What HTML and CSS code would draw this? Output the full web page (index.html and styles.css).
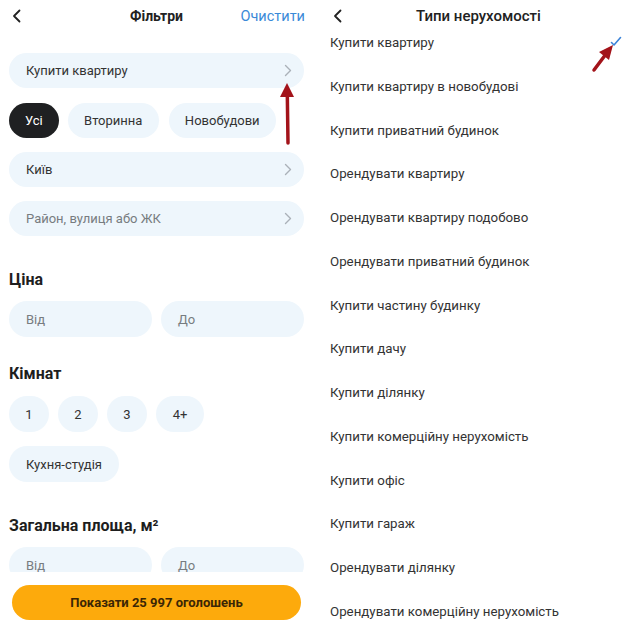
FILE: index.html
```html
<!DOCTYPE html>
<html lang="uk">
<head>
  <meta charset="UTF-8">
  <meta name="viewport" content="width=device-width, initial-scale=1.0">
  <title>Фільтри</title>
  <link rel="stylesheet" href="styles.css">
</head>
<body>

  <div class="screens">

    <!-- left: filters -->
    <section class="screen filters">
      <header class="topbar">
        <svg class="back" width="9" height="14" viewBox="0 0 9 14"><path d="M7.5 1.5 2 7l5.5 5.5" fill="none" stroke="#222" stroke-width="1.8" stroke-linecap="round" stroke-linejoin="round"/></svg>
        <h1>Фільтри</h1>
        <a class="clear">Очистити</a>
      </header>

      <div class="scroll">
        <div class="field select">
          <span>Купити квартиру</span>
          <svg class="chev" width="8" height="13" viewBox="0 0 8 13"><path d="M1.5 1.5 6.5 6.5l-5 5" fill="none" stroke="#aab1b8" stroke-width="1.4" stroke-linecap="round" stroke-linejoin="round"/></svg>
        </div>

        <div class="chips deal">
          <span class="chip active">Усі</span>
          <span class="chip">Вторинна</span>
          <span class="chip">Новобудови</span>
        </div>

        <div class="field select city">
          <span>Київ</span>
          <svg class="chev" width="8" height="13" viewBox="0 0 8 13"><path d="M1.5 1.5 6.5 6.5l-5 5" fill="none" stroke="#aab1b8" stroke-width="1.4" stroke-linecap="round" stroke-linejoin="round"/></svg>
        </div>

        <div class="field select street">
          <span class="placeholder">Район, вулиця або ЖК</span>
          <svg class="chev" width="8" height="13" viewBox="0 0 8 13"><path d="M1.5 1.5 6.5 6.5l-5 5" fill="none" stroke="#aab1b8" stroke-width="1.4" stroke-linecap="round" stroke-linejoin="round"/></svg>
        </div>

        <h2 class="price-title">Ціна</h2>
        <div class="range">
          <div class="field"><span class="placeholder">Від</span></div>
          <div class="field"><span class="placeholder">До</span></div>
        </div>

        <h2 class="rooms-title">Кімнат</h2>
        <div class="chips rooms">
          <span class="chip num">1</span>
          <span class="chip num">2</span>
          <span class="chip num">3</span>
          <span class="chip num wide">4+</span>
        </div>
        <div class="chips kitchen">
          <span class="chip">Кухня-студія</span>
        </div>

        <h2 class="area-title">Загальна площа, м²</h2>
        <div class="range area">
          <div class="field"><span class="placeholder">Від</span></div>
          <div class="field"><span class="placeholder">До</span></div>
        </div>
      </div>

      <div class="footer">
        <button class="show-btn">Показати 25 997 оголошень</button>
      </div>
    </section>

    <!-- right: property types -->
    <section class="screen types">
      <header class="topbar">
        <svg class="back" width="9" height="14" viewBox="0 0 9 14"><path d="M7.5 1.5 2 7l5.5 5.5" fill="none" stroke="#222" stroke-width="1.8" stroke-linecap="round" stroke-linejoin="round"/></svg>
        <h1>Типи нерухомості</h1>
      </header>

      <ul class="type-list">
        <li class="selected">
          <span>Купити квартиру</span>
          <svg class="check" width="12" height="11" viewBox="0 0 12 11"><path d="M1.5 6.5 4 9l6.5-7.5" fill="none" stroke="#3b83d8" stroke-width="1.6" stroke-linecap="round" stroke-linejoin="round"/></svg>
        </li>
        <li>Купити квартиру в новобудові</li>
        <li>Купити приватний будинок</li>
        <li>Орендувати квартиру</li>
        <li>Орендувати квартиру подобово</li>
        <li>Орендувати приватний будинок</li>
        <li>Купити частину будинку</li>
        <li>Купити дачу</li>
        <li>Купити ділянку</li>
        <li>Купити комерційну нерухомість</li>
        <li>Купити офіс</li>
        <li>Купити гараж</li>
        <li>Орендувати ділянку</li>
        <li>Орендувати комерційну нерухомість</li>
      </ul>
    </section>

    <!-- red annotation arrows drawn over the screenshots -->
    <svg class="marks" width="625" height="624" viewBox="0 0 625 624">
      <path d="M288 143 L287.3 94" stroke="#a3131a" stroke-width="3.5" stroke-linecap="round"/>
      <path d="M287 83 L280 97 L294 97 Z" fill="#a3131a"/>
      <path d="M594 70 L606 54" stroke="#a3131a" stroke-width="3.5" stroke-linecap="round"/>
      <path d="M613 45 L599 52 L609 60 Z" fill="#a3131a"/>
    </svg>

  </div>

</body>
</html>
```

FILE: styles.css
```css
*{
margin: 0;
padding: 0;
box-sizing: border-box;
font-family: Roboto, 'Noto Sans', sans-serif;
}

html, body{
height: 100%;
overflow: hidden;
background: #fff;
color: #2b2b2b;
}

.screens{
position: relative;
display: flex;
width: 625px;
height: 624px;
}

.screen{
height: 624px;
}

/* ---------- filters ---------- */

.filters{
width: 315px;
padding: 0 11px 0 9px;
display: flex;
flex-direction: column;
}

.topbar{
height: 32px;
display: flex;
align-items: center;
position: relative;
}

.topbar h1{
font-size: 14px;
font-weight: 700;
color: #222;
}

.filters .topbar .back{
margin-left: 3px;
}

.filters .topbar h1{
position: absolute;
left: 0;
right: 0;
text-align: center;
pointer-events: none;
}

.clear{
margin-left: auto;
margin-right: -1px;
font-size: 14.5px;
color: #3a8ad8;
}

.scroll{
height: 540px;
overflow: hidden;
}

.field{
height: 35px;
border-radius: 18px;
background: #eef6fc;
display: flex;
align-items: center;
padding: 0 12px 0 17px;
font-size: 13px;
color: #333;
}

.field.select{
justify-content: space-between;
}

.field.select:first-child{
margin-top: 21px;
}

.placeholder{
color: #777c80;
}

.city{
margin-top: 14px;
}

.street{
margin-top: 14px;
}

.chips{
display: flex;
gap: 9px;
}

.chip{
height: 35px;
border-radius: 18px;
background: #eef6fc;
display: flex;
align-items: center;
justify-content: center;
padding: 0 17px;
font-size: 13px;
color: #333;
white-space: nowrap;
}

.chip.active{
background: #1f2022;
color: #fff;
padding: 0 16px;
}

.deal{
margin-top: 15px;
}

.deal .chip:nth-child(2){
width: 91px;
}

.deal .chip:nth-child(3){
width: 107px;
margin-left: 1px;
}

.chip.num{
width: 40px;
padding: 0;
height: 36px;
}

.chip.wide{
width: 48px;
}

h2{
font-size: 16px;
font-weight: 700;
line-height: 20px;
color: #1e1e1e;
}

.price-title{
margin-top: 34px;
}

.range{
display: flex;
gap: 9px;
margin-top: 11px;
}

.range .field{
flex: 1;
height: 36px;
}

.rooms-title{
margin-top: 27px;
}

.rooms{
margin-top: 12px;
}

.kitchen{
margin-top: 14px;
}

.kitchen .chip{
width: 110px;
height: 36px;
padding: 0;
}

.area-title{
margin-top: 34px;
}

.range.area{
margin-top: 11px;
}

.footer{
padding: 13px 3px 0;
}

.show-btn{
width: 289px;
height: 35px;
border: none;
border-radius: 18px;
background: #fdaa0c;
color: #3b2605;
font-size: 13px;
font-weight: 700;
}

/* ---------- property types ---------- */

.types{
width: 310px;
padding: 0 3px 0 15px;
}

.types .topbar .back{
margin-left: 3px;
}

.types .topbar h1{
margin-left: 74px;
font-size: 15px;
font-weight: 500;
}

.type-list{
list-style: none;
}

.type-list li{
height: 43.75px;
padding-top: 2px;
line-height: 18px;
font-size: 13.3px;
color: #333;
display: flex;
justify-content: space-between;
align-items: flex-start;
}

.check{
margin-top: 2px;
}

/* ---------- annotations ---------- */

.marks{
position: absolute;
left: 0;
top: 0;
pointer-events: none;
}
```
